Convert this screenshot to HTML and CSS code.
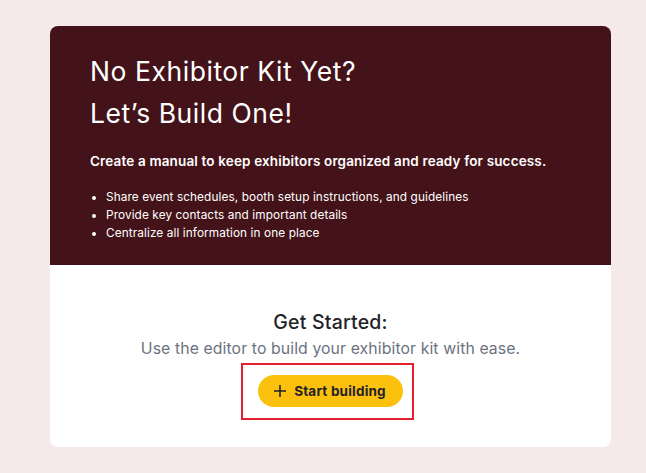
FILE: index.html
```html
<!DOCTYPE html>
<html>
<head>
<meta charset="utf-8">
<link rel="stylesheet" href="styles.css">
</head>
<body>
<div class="card">
  <section class="hero">
    <h1 class="title">No Exhibitor Kit Yet?<br>Let’s Build One!</h1>
    <p class="lead">Create a manual to keep exhibitors organized and ready for success.</p>
    <ul class="points">
      <li>Share event schedules, booth setup instructions, and guidelines</li>
      <li>Provide key contacts and important details</li>
      <li>Centralize all information in one place</li>
    </ul>
  </section>
  <section class="start">
    <h2 class="start-title">Get Started:</h2>
    <p class="start-sub">Use the editor to build your exhibitor kit with ease.</p>
    <div class="highlight">
      <button class="btn">
        <svg width="12" height="12" viewBox="0 0 12 12"><path d="M6 0.5v11M0.5 6h11" stroke="#1f2328" stroke-width="1.6" stroke-linecap="round"/></svg>
        <span>Start building</span>
      </button>
    </div>
  </section>
</div>
</body>
</html>
```

FILE: styles.css
```css
html, body {
  margin: 0;
  padding: 0;
}
body {
  background: #f5e9e9;
  font-family: "Inter", "Noto Sans", sans-serif;
  padding: 26px 35px 0 50px;
}
.card {
  width: 561px;
  background: #fff;
  border-radius: 8px;
  overflow: hidden;
}
.hero {
  background: #441319;
  color: #fff;
  padding: 24px 40px 23px 40px;
}
.title {
  margin: 0;
  font-weight: 400;
  font-size: 26.5px;
  line-height: 42px;
  letter-spacing: 0.55px;
}
.lead {
  margin: 18px 0 0 0;
  font-size: 13.5px;
  font-weight: 600;
  line-height: 18px;
  letter-spacing: 0.15px;
}
.points {
  margin: 18px 0 0 0;
  padding-left: 16px;
  font-size: 11.8px;
  line-height: 18px;
  letter-spacing: 0.1px;
}
.start {
  display: flex;
  flex-direction: column;
  align-items: center;
  padding: 45px 0 27px;
}
.start-title {
  margin: 0;
  font-size: 19.5px;
  font-weight: 500;
  color: #1f2328;
  line-height: 24px;
  letter-spacing: 0.2px;
}
.start-sub {
  margin: 5px 0 0;
  font-size: 15.8px;
  color: #6b7280;
  line-height: 20px;
  letter-spacing: 0.1px;
}
.highlight {
  margin: 4px 6px 0 0;
  border: 2px solid #e5202e;
  padding: 10px 9px 11px 15px;
}
.btn {
  display: flex;
  align-items: center;
  gap: 8px;
  height: 32px;
  padding: 0 17px 0 16px;
  border: none;
  border-radius: 16px;
  background: #fcc10d;
  font-family: inherit;
  font-size: 13.5px;
  font-weight: 700;
  color: #1f2328;
  letter-spacing: 0.2px;
}
```
